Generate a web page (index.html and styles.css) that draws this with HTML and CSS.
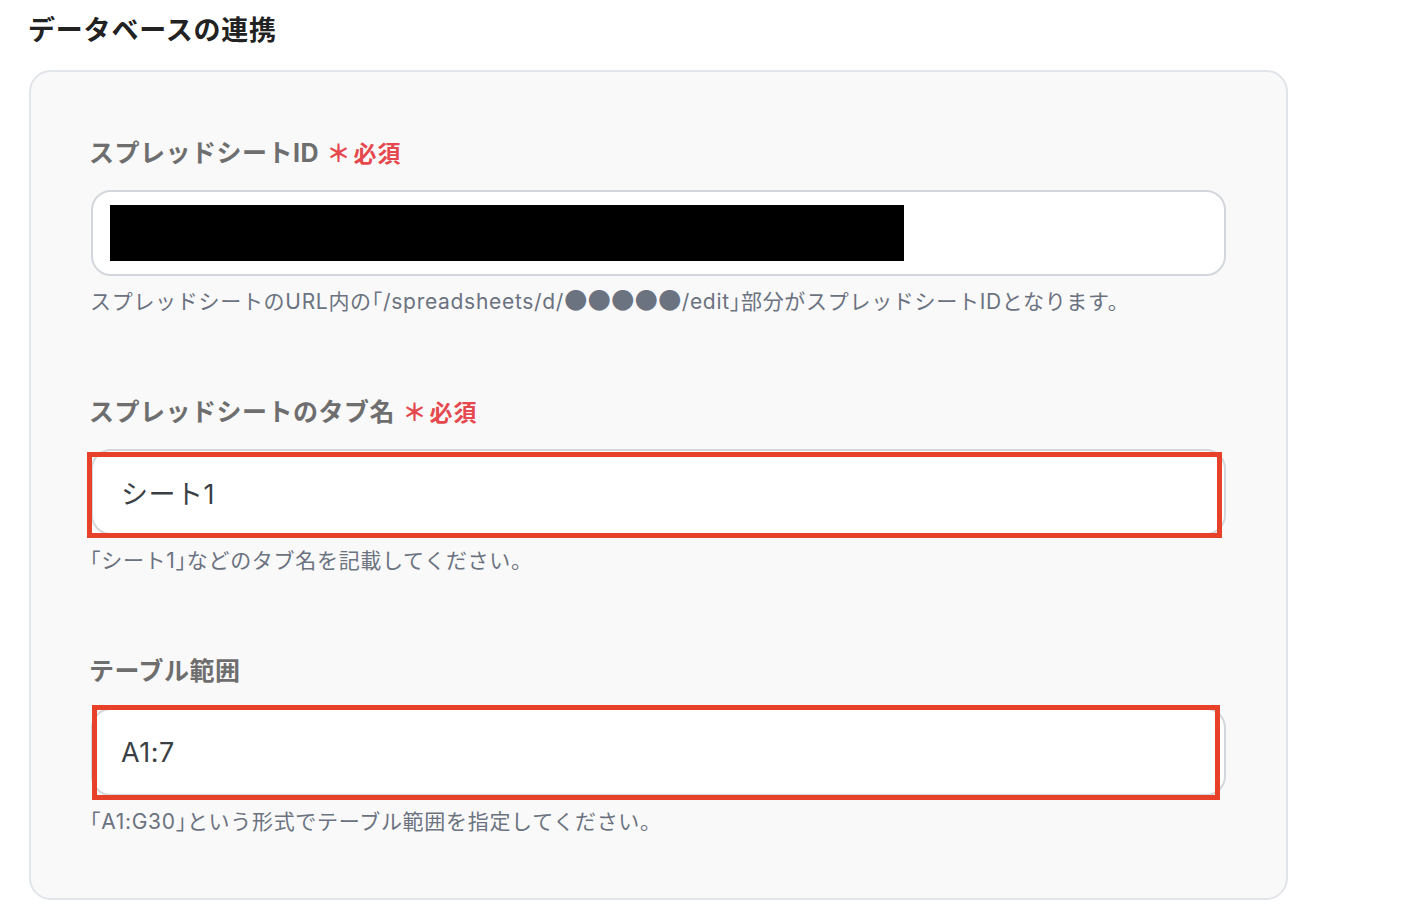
FILE: index.html
```html
<!DOCTYPE html>
<html lang="ja">
<head>
<meta charset="utf-8">
<title>データベースの連携</title>
<link rel="stylesheet" href="styles.css">
</head>
<body>
<div class="page">
  <h2 class="title">データベースの連携</h2>
  <div class="card">
    <div class="field">
      <div class="label">スプレッドシートID <span class="req"><span class="ast">＊</span>必須</span></div>
      <div class="input-wrap">
        <div class="input input-redacted"><div class="redact"></div></div>
      </div>
      <div class="help">スプレッドシートのURL内の<span class="bk">「</span>/spreadsheets/d/<span class="dots">●●●●●</span>/edit<span class="bk">」</span>部分がスプレッドシートIDとなります。</div>
    </div>
    <div class="field">
      <div class="label">スプレッドシートのタブ名 <span class="req"><span class="ast">＊</span>必須</span></div>
      <div class="input-wrap">
        <div class="input">シート1</div>
        <div class="highlight hl-tab"></div>
      </div>
      <div class="help"><span class="bk">「</span>シート1<span class="bk">」</span>などのタブ名を記載してください。</div>
    </div>
    <div class="field">
      <div class="label">テーブル範囲</div>
      <div class="input-wrap">
        <div class="input input-range">A1:7</div>
        <div class="highlight hl-range"></div>
      </div>
      <div class="help"><span class="bk">「</span>A1:G30<span class="bk">」</span>という形式でテーブル範囲を指定してください。</div>
    </div>
  </div>
</div>
</body>
</html>
```

FILE: styles.css
```css
* { box-sizing: border-box; }
html, body { margin: 0; padding: 0; background: #ffffff; }
body {
  font-family: "Inter", "Noto Sans CJK JP", "Noto Sans", sans-serif;
  color: #222;
}
.page {
  padding: 13px 29px 0 29px;
}
.title {
  margin: 0 0 21px -1px;
  font-size: 27px;
  line-height: 36px;
  font-weight: 700;
  letter-spacing: 0.8px;
  color: #222;
}
.card {
  width: 1259px;
  background: #f9f9f9;
  border: 2px solid #e1e4e8;
  border-radius: 22px;
  padding: 63px 60px 61px 60px;
}
.field { margin-bottom: 77px; }
.field:last-child { margin-bottom: 0; }
.label {
  height: 36px;
  font-size: 25px;
  line-height: 36px;
  font-weight: 700;
  letter-spacing: 0.5px;
  color: #6e6e6e;
  margin: 0 0 19px -2px;
  white-space: nowrap;
}
.req {
  color: #e5484d;
  font-size: 23px;
  margin-left: 1px;
  letter-spacing: 1px;
  line-height: 1;
}
.ast { font-size: 24px; margin-right: 2px; }
.input-wrap { position: relative; }
.input {
  height: 86px;
  background: #fff;
  border: 2px solid #d3d7dc;
  border-radius: 20px;
  padding: 0 28px;
  display: flex;
  align-items: center;
  font-size: 27px;
  letter-spacing: 0.5px;
  color: #3a3f45;
}
.input-range { height: 88px; }
.input-redacted { padding: 0 17px; }
.redact {
  width: 794px;
  height: 56px;
  background: #000;
}
.highlight {
  position: absolute;
  border: 5px solid #e8412a;
  pointer-events: none;
}
.hl-tab { left: -4px; top: 3px; width: 1135px; height: 86px; }
.hl-range { left: 1px; top: -3px; width: 1128px; height: 95px; }
.help {
  height: 30px;
  margin: 11px 0 0 -1px;
  font-size: 21px;
  line-height: 30px;
  letter-spacing: 0.7px;
  color: #6b7280;
  white-space: nowrap;
}
.bk {
  font-family: "Noto Sans CJK JP", sans-serif;
  font-feature-settings: "halt";
  line-height: 1;
}
.dots {
  font-family: "Noto Sans CJK JP", sans-serif;
  font-size: 23px;
  letter-spacing: 0.5px;
  line-height: 1;
}
```
